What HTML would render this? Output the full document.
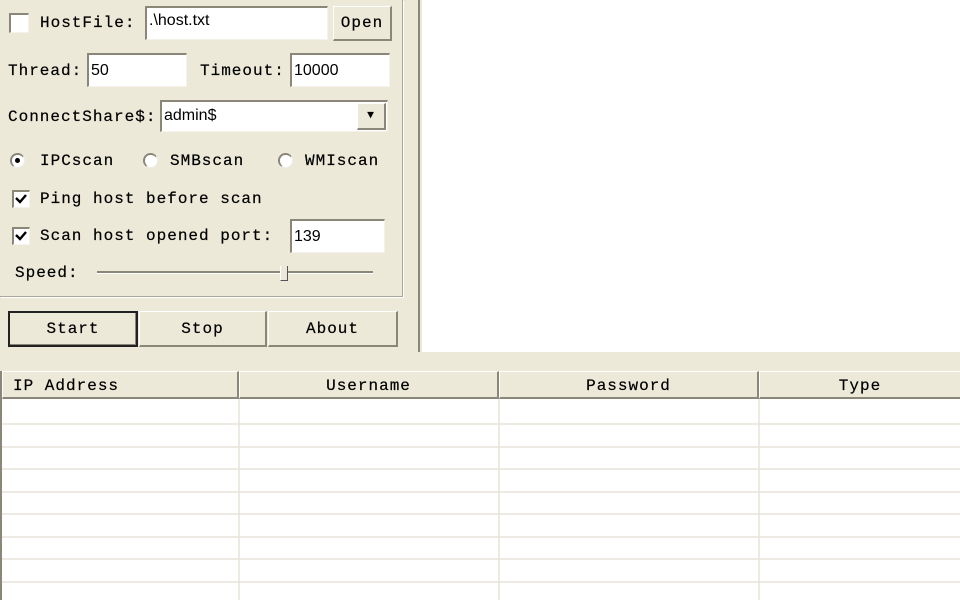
<!DOCTYPE html><html><head><style>
body{margin:0;width:960px;height:600px;background:#fff;position:relative;overflow:hidden;font-family:"Liberation Mono","Noto Sans CJK SC",monospace;font-size:16px;color:#000}
.a{position:absolute}
.t{position:absolute;line-height:18px;white-space:nowrap;letter-spacing:1px;-webkit-text-stroke:0.2px #000}
.edit{position:absolute;background:#fff;border-top:2px solid #8a8778;border-left:2px solid #8a8778;border-right:1px solid #f4f2ea;border-bottom:1px solid #f4f2ea;box-sizing:border-box;font-family:"Liberation Sans",sans-serif;font-size:16px;padding:6px 2px 0;line-height:20px}
.btn{position:absolute;background:#ece9d8;border-top:1px solid #fff;border-left:1px solid #fff;border-right:2px solid #8a8778;border-bottom:2px solid #8a8778;box-sizing:border-box;text-align:center;letter-spacing:1px;-webkit-text-stroke:0.2px #000}
.cb{position:absolute;width:18px;height:18px;background:#fff;border-top:2px solid #8a8778;border-left:2px solid #8a8778;border-right:1px solid #f4f2ea;border-bottom:1px solid #f4f2ea;box-sizing:border-box}
.rd{position:absolute;width:15px;height:15px;border-radius:50%;background:#fff;border-top:2px solid #8a8778;border-left:2px solid #8a8778;border-right:1px solid #eee;border-bottom:1px solid #eee;box-sizing:border-box}
.hd{position:absolute;top:371px;height:28px;background:#ece9d8;border-right:2px solid #8a8778;border-bottom:2px solid #8a8778;border-top:1px solid #fff;border-left:1px solid #fff;box-sizing:border-box;line-height:28px;letter-spacing:1px;-webkit-text-stroke:0.2px #000}
</style></head><body>
<div class="a" style="left:0;top:0;width:420px;height:352px;background:#ece9d8"></div>
<div class="a" style="left:418px;top:0;width:2px;height:352px;background:#8a8778"></div>
<div class="a" style="left:420px;top:0;width:2px;height:352px;background:#ece9d8"></div>
<div class="a" style="left:0;top:352px;width:960px;height:19px;background:#ece9d8"></div>
<div class="a" style="left:0;top:0;width:402px;height:296px;border-right:1px solid #aca899;border-bottom:1px solid #aca899;box-shadow:1px 1px 0 #fff"></div>

<div class="cb" style="left:9px;top:13px;width:20px;height:20px"></div>
<div class="t" style="left:40px;top:14px">HostFile:</div>
<div class="edit" style="left:145px;top:6px;width:183px;height:34px;padding-top:3px">.\host.txt</div>
<div class="btn" style="left:333px;top:6px;width:59px;height:35px;line-height:32px">Open</div>

<div class="t" style="left:8px;top:62px">Thread:</div>
<div class="edit" style="left:87px;top:53px;width:100px;height:34px">50</div>
<div class="t" style="left:200px;top:62px">Timeout:</div>
<div class="edit" style="left:290px;top:53px;width:100px;height:34px">10000</div>

<div class="t" style="left:8px;top:108px">ConnectShare$:</div>
<div class="edit" style="left:160px;top:100px;width:228px;height:32px;padding-top:4px">admin$</div>
<div class="btn" style="left:357px;top:103px;width:29px;height:27px;font-size:11px;line-height:25px">▼</div>

<div class="rd" style="left:10px;top:153px"></div><div class="a" style="left:15px;top:158px;width:5px;height:5px;border-radius:50%;background:#000"></div>
<div class="t" style="left:40px;top:152px">IPCscan</div>
<div class="rd" style="left:143px;top:153px"></div>
<div class="t" style="left:170px;top:152px">SMBscan</div>
<div class="rd" style="left:278px;top:153px"></div>
<div class="t" style="left:305px;top:152px">WMIscan</div>

<div class="cb" style="left:12px;top:190px"><svg width="15" height="15" style="position:absolute;left:0;top:0"><path d="M2 6 L6 10 L12 3" stroke="#000" stroke-width="2.4" fill="none"/></svg></div>
<div class="t" style="left:40px;top:190px">Ping host before scan</div>
<div class="cb" style="left:12px;top:227px"><svg width="15" height="15" style="position:absolute;left:0;top:0"><path d="M2 6 L6 10 L12 3" stroke="#000" stroke-width="2.4" fill="none"/></svg></div>
<div class="t" style="left:40px;top:227px">Scan host opened port:</div>
<div class="edit" style="left:290px;top:219px;width:95px;height:34px">139</div>

<div class="t" style="left:15px;top:264px">Speed:</div>
<div class="a" style="left:97px;top:271px;width:276px;height:2px;background:#8a8778;border-bottom:1px solid #fff"></div>
<div class="a" style="left:280px;top:266px;width:6px;height:14px;background:#ece9d8;border-right:1px solid #555;border-bottom:1px solid #555;border-left:1px solid #fff"></div>

<div class="btn" style="left:8px;top:311px;width:130px;height:36px;line-height:32px;border:2px solid #222;box-shadow:inset -1px -1px 0 #8a8778">Start</div>
<div class="btn" style="left:139px;top:311px;width:128px;height:36px;line-height:35px">Stop</div>
<div class="btn" style="left:268px;top:311px;width:130px;height:36px;line-height:35px">About</div>

<div class="hd" style="left:2px;width:237px;padding-left:10px">IP Address</div>
<div class="hd" style="left:239px;width:260px;text-align:center">Username</div>
<div class="hd" style="left:499px;width:260px;text-align:center">Password</div>
<div class="hd" style="left:759px;width:203px;text-align:center">Type</div>
<div class="a" style="left:0;top:371px;width:2px;height:229px;background:#8a8778"></div>

<svg class="a" style="left:2px;top:399px" width="958" height="201">
<g stroke="#e6e4da" stroke-width="1.5">
<line x1="0" y1="25" x2="958" y2="25"/><line x1="0" y1="48" x2="958" y2="48"/><line x1="0" y1="70" x2="958" y2="70"/><line x1="0" y1="93" x2="958" y2="93"/><line x1="0" y1="115" x2="958" y2="115"/><line x1="0" y1="138" x2="958" y2="138"/><line x1="0" y1="160" x2="958" y2="160"/><line x1="0" y1="183" x2="958" y2="183"/>
<line x1="237" y1="0" x2="237" y2="201"/><line x1="497" y1="0" x2="497" y2="201"/><line x1="757" y1="0" x2="757" y2="201"/>
</g></svg>
</body></html>
